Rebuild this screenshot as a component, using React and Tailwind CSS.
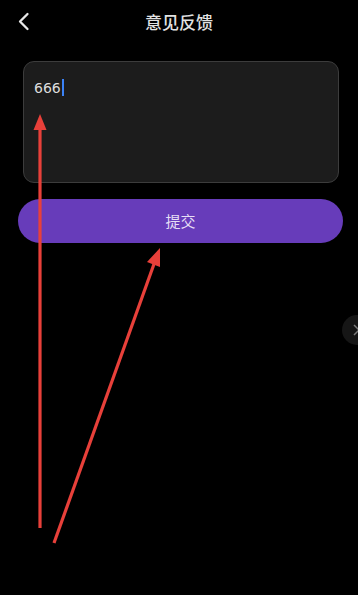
import React from "react";

export default function App() {
  return (
    <div
      className="relative w-[358px] h-[595px] bg-black overflow-hidden"
      style={{ fontFamily: '"Noto Sans", "Noto Sans CJK SC", sans-serif' }}
    >
      {/* Header */}
      <div className="relative h-[44px] flex items-center justify-center">
        <svg className="absolute left-[17px] top-[12px]" width="14" height="19" viewBox="0 0 14 19">
          <path d="M10.5 2 L3 9.5 L10.5 17" stroke="#e8e8e8" strokeWidth="2.3" fill="none" strokeLinecap="round" strokeLinejoin="round" />
        </svg>
        <span className="text-[17px] text-[#e2e2e2] leading-none font-medium">意见反馈</span>
      </div>

      {/* Textarea */}
      <div className="ml-[23px] mr-[19px] mt-[17px] h-[122px] rounded-[11px] border border-[#3c3c3c] bg-[#1c1c1c] px-[10px] pt-[17px]">
        <div className="flex items-center">
          <span className="text-[14px] text-[#dcdcdc] leading-none" style={{ fontFamily: '"DejaVu Sans", sans-serif' }}>666</span>
          <span className="ml-[1px] w-[2px] h-[17px] bg-[#3b82f6]" />
        </div>
      </div>

      {/* Button */}
      <div className="ml-[18px] mr-[15px] mt-[16px] h-[44px] rounded-full bg-[#673cba] flex items-center justify-center">
        <span className="text-[15px] text-[#e6def5] leading-none">提交</span>
      </div>

      {/* Right floating handle */}
      <div className="absolute left-[342px] top-[315px] w-[30px] h-[30px] rounded-full bg-[#161616] flex items-center pl-[10px]">
        <svg width="8" height="12" viewBox="0 0 8 12">
          <path d="M2 1 L7 6 L2 11" stroke="#7a7a7a" strokeWidth="1.5" fill="none" />
        </svg>
      </div>

      {/* Red annotation arrows */}
      <svg className="absolute inset-0 pointer-events-none" width="358" height="595" viewBox="0 0 358 595">
        <line x1="40" y1="528" x2="40" y2="128" stroke="#e8403a" strokeWidth="3.2" />
        <polygon points="40,114 33.5,130 46.5,130" fill="#e8403a" />
        <line x1="54" y1="543" x2="154" y2="264" stroke="#e8403a" strokeWidth="3.2" />
        <polygon points="160,248 147,262 160,267" fill="#e8403a" />
      </svg>
    </div>
  );
}
